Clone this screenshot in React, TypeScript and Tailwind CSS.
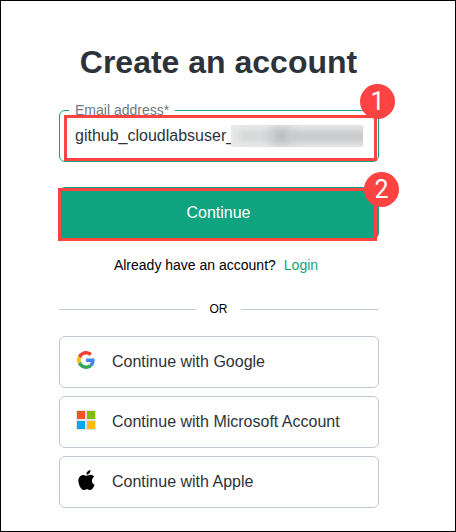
import type { ReactNode } from "react";

function GoogleIcon() {
  return (
    <svg width="18" height="18" viewBox="0 0 48 48">
      <path fill="#EA4335" d="M24 9.5c3.54 0 6.71 1.22 9.21 3.6l6.85-6.85C35.9 2.38 30.47 0 24 0 14.62 0 6.51 5.38 2.56 13.22l7.98 6.19C12.43 13.72 17.74 9.5 24 9.5z" />
      <path fill="#4285F4" d="M46.98 24.55c0-1.57-.15-3.09-.38-4.55H24v9.02h12.94c-.58 2.96-2.26 5.48-4.78 7.18l7.73 6c4.51-4.18 7.09-10.36 7.09-17.65z" />
      <path fill="#FBBC05" d="M10.53 28.59c-.48-1.45-.76-2.99-.76-4.59s.27-3.14.76-4.59l-7.98-6.19C.92 16.46 0 20.12 0 24c0 3.88.92 7.54 2.56 10.78l7.97-6.19z" />
      <path fill="#34A853" d="M24 48c6.48 0 11.93-2.13 15.89-5.81l-7.73-6c-2.15 1.45-4.92 2.3-8.16 2.3-6.26 0-11.57-4.22-13.47-9.91l-7.98 6.19C6.51 42.62 14.62 48 24 48z" />
    </svg>
  );
}

function MicrosoftIcon() {
  return (
    <svg width="20" height="20" viewBox="0 0 20 20" shapeRendering="crispEdges">
      <path fill="#e3e3e3" d="M0 0h20v20H0z" />
      <path fill="#f35325" d="M1 1h8v8H1z" />
      <path fill="#81bc06" d="M11 1h8v8h-8z" />
      <path fill="#05a6f0" d="M1 11h8v8H1z" />
      <path fill="#ffba08" d="M11 11h8v8h-8z" />
    </svg>
  );
}

function AppleIcon() {
  return (
    <svg width="17" height="20" viewBox="0 0 814 1000">
      <path d="M788.1 340.9c-5.8 4.5-108.2 62.2-108.2 190.5 0 148.4 130.3 200.9 134.2 202.2-.6 3.2-20.7 71.9-68.7 141.9-42.8 61.6-87.5 123.1-155.5 123.1s-85.5-39.5-164-39.5c-76.500 0-103.700 40.800-165.900 40.800s-105.600-57-155.500-127C46.700 790.700 0 663 0 541.800c0-194.400 126.400-297.500 250.800-297.500 66.100 0 121.200 43.400 162.700 43.400 39.500 0 101.100-46 176.300-46 28.500 0 130.900 2.600 198.300 99.200zm-234-181.500c31.100-36.900 53.100-88.100 53.100-139.300 0-7.100-.6-14.300-1.900-20.100-50.600 1.900-110.800 33.700-147.100 75.800-28.500 32.400-55.100 83.600-55.100 135.500 0 7.800 1.300 15.600 1.900 18.100 3.200.6 8.400 1.300 13.600 1.300 45.400 0 102.500-30.400 135.500-71.300z" />
    </svg>
  );
}

function SocialButton({ icon, children }: { icon: ReactNode; children: ReactNode }) {
  return (
    <button className="flex h-[52px] w-full items-center rounded-md border border-[#c2c8d0] pl-4 text-base text-[#2d333a]">
      <span className="mb-1 flex w-5 justify-center">{icon}</span>
      <span className="ml-4 whitespace-nowrap">{children}</span>
    </button>
  );
}

function Badge({ children }: { children: ReactNode }) {
  return (
    <span className="flex size-[35px] items-center justify-center rounded-full bg-[#ff4242] font-[Roboto,sans-serif] text-[25px] leading-none text-white">
      {children}
    </span>
  );
}

export default function App() {
  return (
    <main className="h-[532px] w-[456px] border border-black bg-white pl-[58px] pt-[41px] font-['Liberation_Sans',Arial,sans-serif]">
      <div className="w-80">
        <h1 className="-ml-px whitespace-nowrap text-center text-[32px] font-bold leading-10 text-[#2d333a]">Create an account</h1>

        <div className="relative mt-7 flex h-[52px] items-center rounded-md border border-[#10a37f] pl-[15px]">
          <label className="absolute -top-[11px] left-[9px] w-[106px] bg-white pl-1.5 text-sm leading-5 whitespace-nowrap text-[#6f7780]">Email address*</label>
          <span className="text-base text-[#2d333a]">github_cloudlabsuser_</span>
          <span className="absolute left-[171px] top-[14px] h-[22px] w-[132px] overflow-hidden bg-[#e9eaea]">
            <span className="absolute left-2 top-1.5 h-2.5 w-[34px] bg-[#d0d2d3] blur-[4px]" />
            <span className="absolute left-10 top-0.5 h-[18px] w-5 bg-[#bdbfc1] blur-[5px]" />
            <span className="absolute left-[58px] top-1.5 h-[11px] w-[80px] bg-[#c0c2c3] blur-[4px]" />
          </span>
          <span className="absolute left-1 top-1 h-[46px] w-[313px] border-[3px] border-[#ff4242]" />
          <span className="absolute -top-[27px] left-[300px]"><Badge>1</Badge></span>
        </div>

        <div className="relative mt-[25px]">
          <button className="h-[52px] w-full rounded-md bg-[#10a37f] pb-px pr-px text-base text-white">Continue</button>
          <span className="absolute -left-px top-px h-[53px] w-[319px] border-[3px] border-[#ff4242]" />
          <span className="absolute -top-[15px] left-[305px]"><Badge>2</Badge></span>
        </div>

        <p className="mt-4 flex justify-center gap-2 pr-1.5 text-sm leading-5 text-black">
          <span>Already have an account?</span>
          <a className="text-[#10a37f]">Login</a>
        </p>

        <div className="mt-6 flex h-5 w-[319px] items-center text-xs text-black">
          <span className="h-px w-[137px] bg-[#c2c8d0]" />
          <span className="flex-1 text-center">OR</span>
          <span className="h-px w-[137px] bg-[#c2c8d0]" />
        </div>

        <div className="mt-[17px] flex flex-col gap-2">
          <SocialButton icon={<GoogleIcon />}>Continue with Google</SocialButton>
          <SocialButton icon={<MicrosoftIcon />}>Continue with Microsoft Account</SocialButton>
          <SocialButton icon={<AppleIcon />}>Continue with Apple</SocialButton>
        </div>
      </div>
    </main>
  );
}
